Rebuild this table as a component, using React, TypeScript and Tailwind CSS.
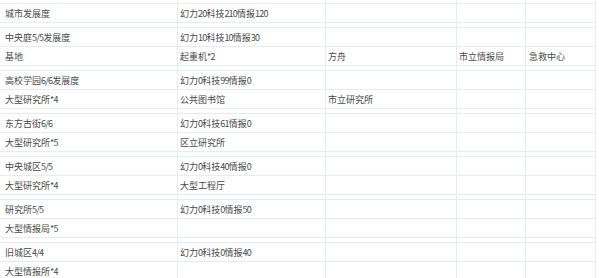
import React from "react";

type Row = { cells: string[]; kind: "row" | "spacer" | "top" };

const widths = ["w-[178px]", "w-[148px]", "w-[131px]", "w-[69px]", "w-[70px]"];
const pads = ["pl-[5px]", "pl-[2px]", "pl-[2px]", "pl-[2px]", "pl-[3px]"];

const rows: Row[] = [
  { kind: "top", cells: [] },
  { kind: "row", cells: ["城市发展度", "幻力20科技210情报120", "", "", ""] },
  { kind: "spacer", cells: [] },
  { kind: "row", cells: ["中央庭5/5发展度", "幻力10科技10情报30", "", "", ""] },
  { kind: "row", cells: ["基地", "起重机*2", "方舟", "市立情报局", "急救中心"] },
  { kind: "spacer", cells: [] },
  { kind: "row", cells: ["高校学园6/6发展度", "幻力0科技99情报0", "", "", ""] },
  { kind: "row", cells: ["大型研究所*4", "公共图书馆", "市立研究所", "", ""] },
  { kind: "spacer", cells: [] },
  { kind: "row", cells: ["东方古街6/6", "幻力0科技61情报0", "", "", ""] },
  { kind: "row", cells: ["大型研究所*5", "区立研究所", "", "", ""] },
  { kind: "spacer", cells: [] },
  { kind: "row", cells: ["中央城区5/5", "幻力0科技40情报0", "", "", ""] },
  { kind: "row", cells: ["大型研究所*4", "大型工程厅", "", "", ""] },
  { kind: "spacer", cells: [] },
  { kind: "row", cells: ["研究所5/5", "幻力0科技0情报50", "", "", ""] },
  { kind: "row", cells: ["大型情报局*5", "", "", "", ""] },
  { kind: "spacer", cells: [] },
  { kind: "row", cells: ["旧城区4/4", "幻力0科技0情报40", "", "", ""] },
  { kind: "row", cells: ["大型情报所*4", "", "", "", ""] },
];

function Text({ s }: { s: string }) {
  const parts = s.split(/([0-9*/]+)/);
  return (
    <>
      {parts.map((p, i) =>
        /^[0-9*/]+$/.test(p) ? (
          <span key={i} className="tracking-[-0.8px]">
            {p}
          </span>
        ) : (
          <span key={i}>{p}</span>
        )
      )}
    </>
  );
}

export default function App() {
  return (
    <div
      className="w-[599px] h-[278px] overflow-hidden bg-white text-[9px] text-[#484848]"
      style={{ fontFamily: '"Noto Sans CJK SC", "Noto Sans", sans-serif' }}
    >
      {rows.map((r, i) => {
        const h =
          r.kind === "top" ? "h-[4px]" : r.kind === "spacer" ? "h-[5px]" : "h-[19px]";
        return (
          <div key={i} className={`flex ${h}`}>
            {widths.map((w, j) => (
              <div
                key={j}
                className={`${w} ${pads[j]} shrink-0 border-r border-b border-[#e6ecf4] flex items-center whitespace-nowrap overflow-hidden leading-none`}
              >
                {r.kind === "row" && r.cells[j] ? <Text s={r.cells[j]} /> : null}
              </div>
            ))}
          </div>
        );
      })}
    </div>
  );
}
